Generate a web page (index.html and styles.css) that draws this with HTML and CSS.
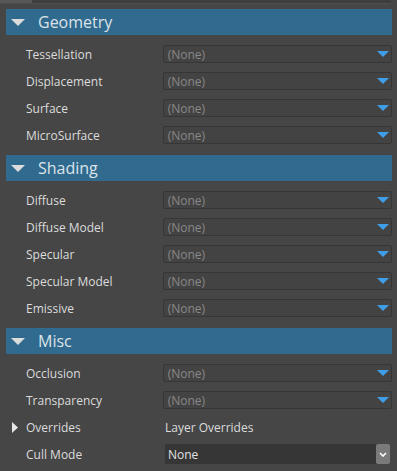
FILE: index.html
```html
<!DOCTYPE html>
<html lang="en">
<head>
    <meta charset="UTF-8">
    <title>Material Properties</title>
    <link rel="stylesheet" href="styles.css">
</head>
<body>
    <div class="topbar"><span class="tab"></span></div>

    <div class="panel">
        <div class="section-header">
            <svg class="caret" width="14" height="7" viewBox="0 0 14 7"><path d="M0 0H14L7 7Z"/></svg>
            <span>Geometry</span>
        </div>
        <div class="row"><span class="label">Tessellation</span><div class="combo"><span>(None)</span><svg class="arrow" width="12" height="6" viewBox="0 0 12 6"><path d="M0 0H12L6 6Z"/></svg></div></div>
        <div class="row"><span class="label">Displacement</span><div class="combo"><span>(None)</span><svg class="arrow" width="12" height="6" viewBox="0 0 12 6"><path d="M0 0H12L6 6Z"/></svg></div></div>
        <div class="row"><span class="label">Surface</span><div class="combo"><span>(None)</span><svg class="arrow" width="12" height="6" viewBox="0 0 12 6"><path d="M0 0H12L6 6Z"/></svg></div></div>
        <div class="row"><span class="label">MicroSurface</span><div class="combo"><span>(None)</span><svg class="arrow" width="12" height="6" viewBox="0 0 12 6"><path d="M0 0H12L6 6Z"/></svg></div></div>

        <div class="section-header">
            <svg class="caret" width="14" height="7" viewBox="0 0 14 7"><path d="M0 0H14L7 7Z"/></svg>
            <span>Shading</span>
        </div>
        <div class="row"><span class="label">Diffuse</span><div class="combo"><span>(None)</span><svg class="arrow" width="12" height="6" viewBox="0 0 12 6"><path d="M0 0H12L6 6Z"/></svg></div></div>
        <div class="row"><span class="label">Diffuse Model</span><div class="combo"><span>(None)</span><svg class="arrow" width="12" height="6" viewBox="0 0 12 6"><path d="M0 0H12L6 6Z"/></svg></div></div>
        <div class="row"><span class="label">Specular</span><div class="combo"><span>(None)</span><svg class="arrow" width="12" height="6" viewBox="0 0 12 6"><path d="M0 0H12L6 6Z"/></svg></div></div>
        <div class="row"><span class="label">Specular Model</span><div class="combo"><span>(None)</span><svg class="arrow" width="12" height="6" viewBox="0 0 12 6"><path d="M0 0H12L6 6Z"/></svg></div></div>
        <div class="row"><span class="label">Emissive</span><div class="combo"><span>(None)</span><svg class="arrow" width="12" height="6" viewBox="0 0 12 6"><path d="M0 0H12L6 6Z"/></svg></div></div>

        <div class="section-header">
            <svg class="caret" width="14" height="7" viewBox="0 0 14 7"><path d="M0 0H14L7 7Z"/></svg>
            <span>Misc</span>
        </div>
        <div class="row"><span class="label">Occlusion</span><div class="combo"><span>(None)</span><svg class="arrow" width="12" height="6" viewBox="0 0 12 6"><path d="M0 0H12L6 6Z"/></svg></div></div>
        <div class="row"><span class="label">Transparency</span><div class="combo"><span>(None)</span><svg class="arrow" width="12" height="6" viewBox="0 0 12 6"><path d="M0 0H12L6 6Z"/></svg></div></div>
        <div class="row">
            <span class="label expander">
                <svg class="side-caret" width="6" height="11" viewBox="0 0 6 11"><path d="M0 0L6 5.5L0 11Z"/></svg>
                Overrides
            </span>
            <span class="value">Layer Overrides</span>
        </div>
        <div class="row">
            <span class="label">Cull Mode</span>
            <div class="select">
                <span>None</span>
                <span class="select-btn">
                    <svg width="8" height="5" viewBox="0 0 8 5"><path d="M1 1L4 4L7 1" fill="none" stroke="#fff" stroke-width="1.6"/></svg>
                </span>
            </div>
        </div>
    </div>
</body>
</html>
```

FILE: styles.css
```css
body {
    margin: 0;
    background-color: #464646;
    font-family: "Open Sans", "Noto Sans", Arial, sans-serif;
    color: #dcdcdc;
    width: 397px;
    height: 471px;
    overflow: hidden;
}
.topbar {
    height: 3px;
    background-color: #3e3e3e;
    border-bottom: 1px solid #4e4e4e;
    margin-right: 6px;
}
.tab {
    display: block;
    width: 32px;
    height: 3px;
    background-color: #575757;
}
.panel {
    padding: 5px 5px 0 6px;
}
.section-header {
    display: flex;
    align-items: center;
    height: 26px;
    margin: 6px 0;
    background-color: #306a8f;
    font-size: 16px;
    color: #dde3e8;
}
.panel .section-header:first-child {
    margin-top: 0;
}
.caret {
    fill: #dcdcdc;
    margin: 1px 13px 0 5px;
}
.row {
    display: flex;
    height: 27px;
    font-size: 12px;
}
.label {
    width: 137px;
    padding-left: 20px;
    line-height: 27px;
    color: #dcdcdc;
}
.expander {
    position: relative;
}
.side-caret {
    position: absolute;
    left: 6px;
    top: 8px;
    fill: #e6e6e6;
}
.combo {
    display: flex;
    align-items: center;
    justify-content: space-between;
    box-sizing: border-box;
    width: 230px;
    height: 18px;
    margin-top: 4px;
    padding: 0 2px 0 4px;
    border: 1px solid #363636;
    border-radius: 2px;
    background-color: #434343;
    color: #888;
}
.arrow {
    fill: #3f9ee8;
}
.value {
    line-height: 27px;
    padding-left: 2px;
}
.select {
    display: flex;
    align-items: center;
    justify-content: space-between;
    box-sizing: border-box;
    width: 225px;
    height: 20px;
    margin: 3px 0 0 2px;
    padding-left: 3px;
    background-color: #363636;
    border-radius: 2px;
    color: #e0e0e0;
}
.select-btn {
    display: flex;
    align-items: center;
    justify-content: center;
    width: 14px;
    height: 20px;
    background-color: #7a7a7a;
    border-radius: 2px;
}
```
